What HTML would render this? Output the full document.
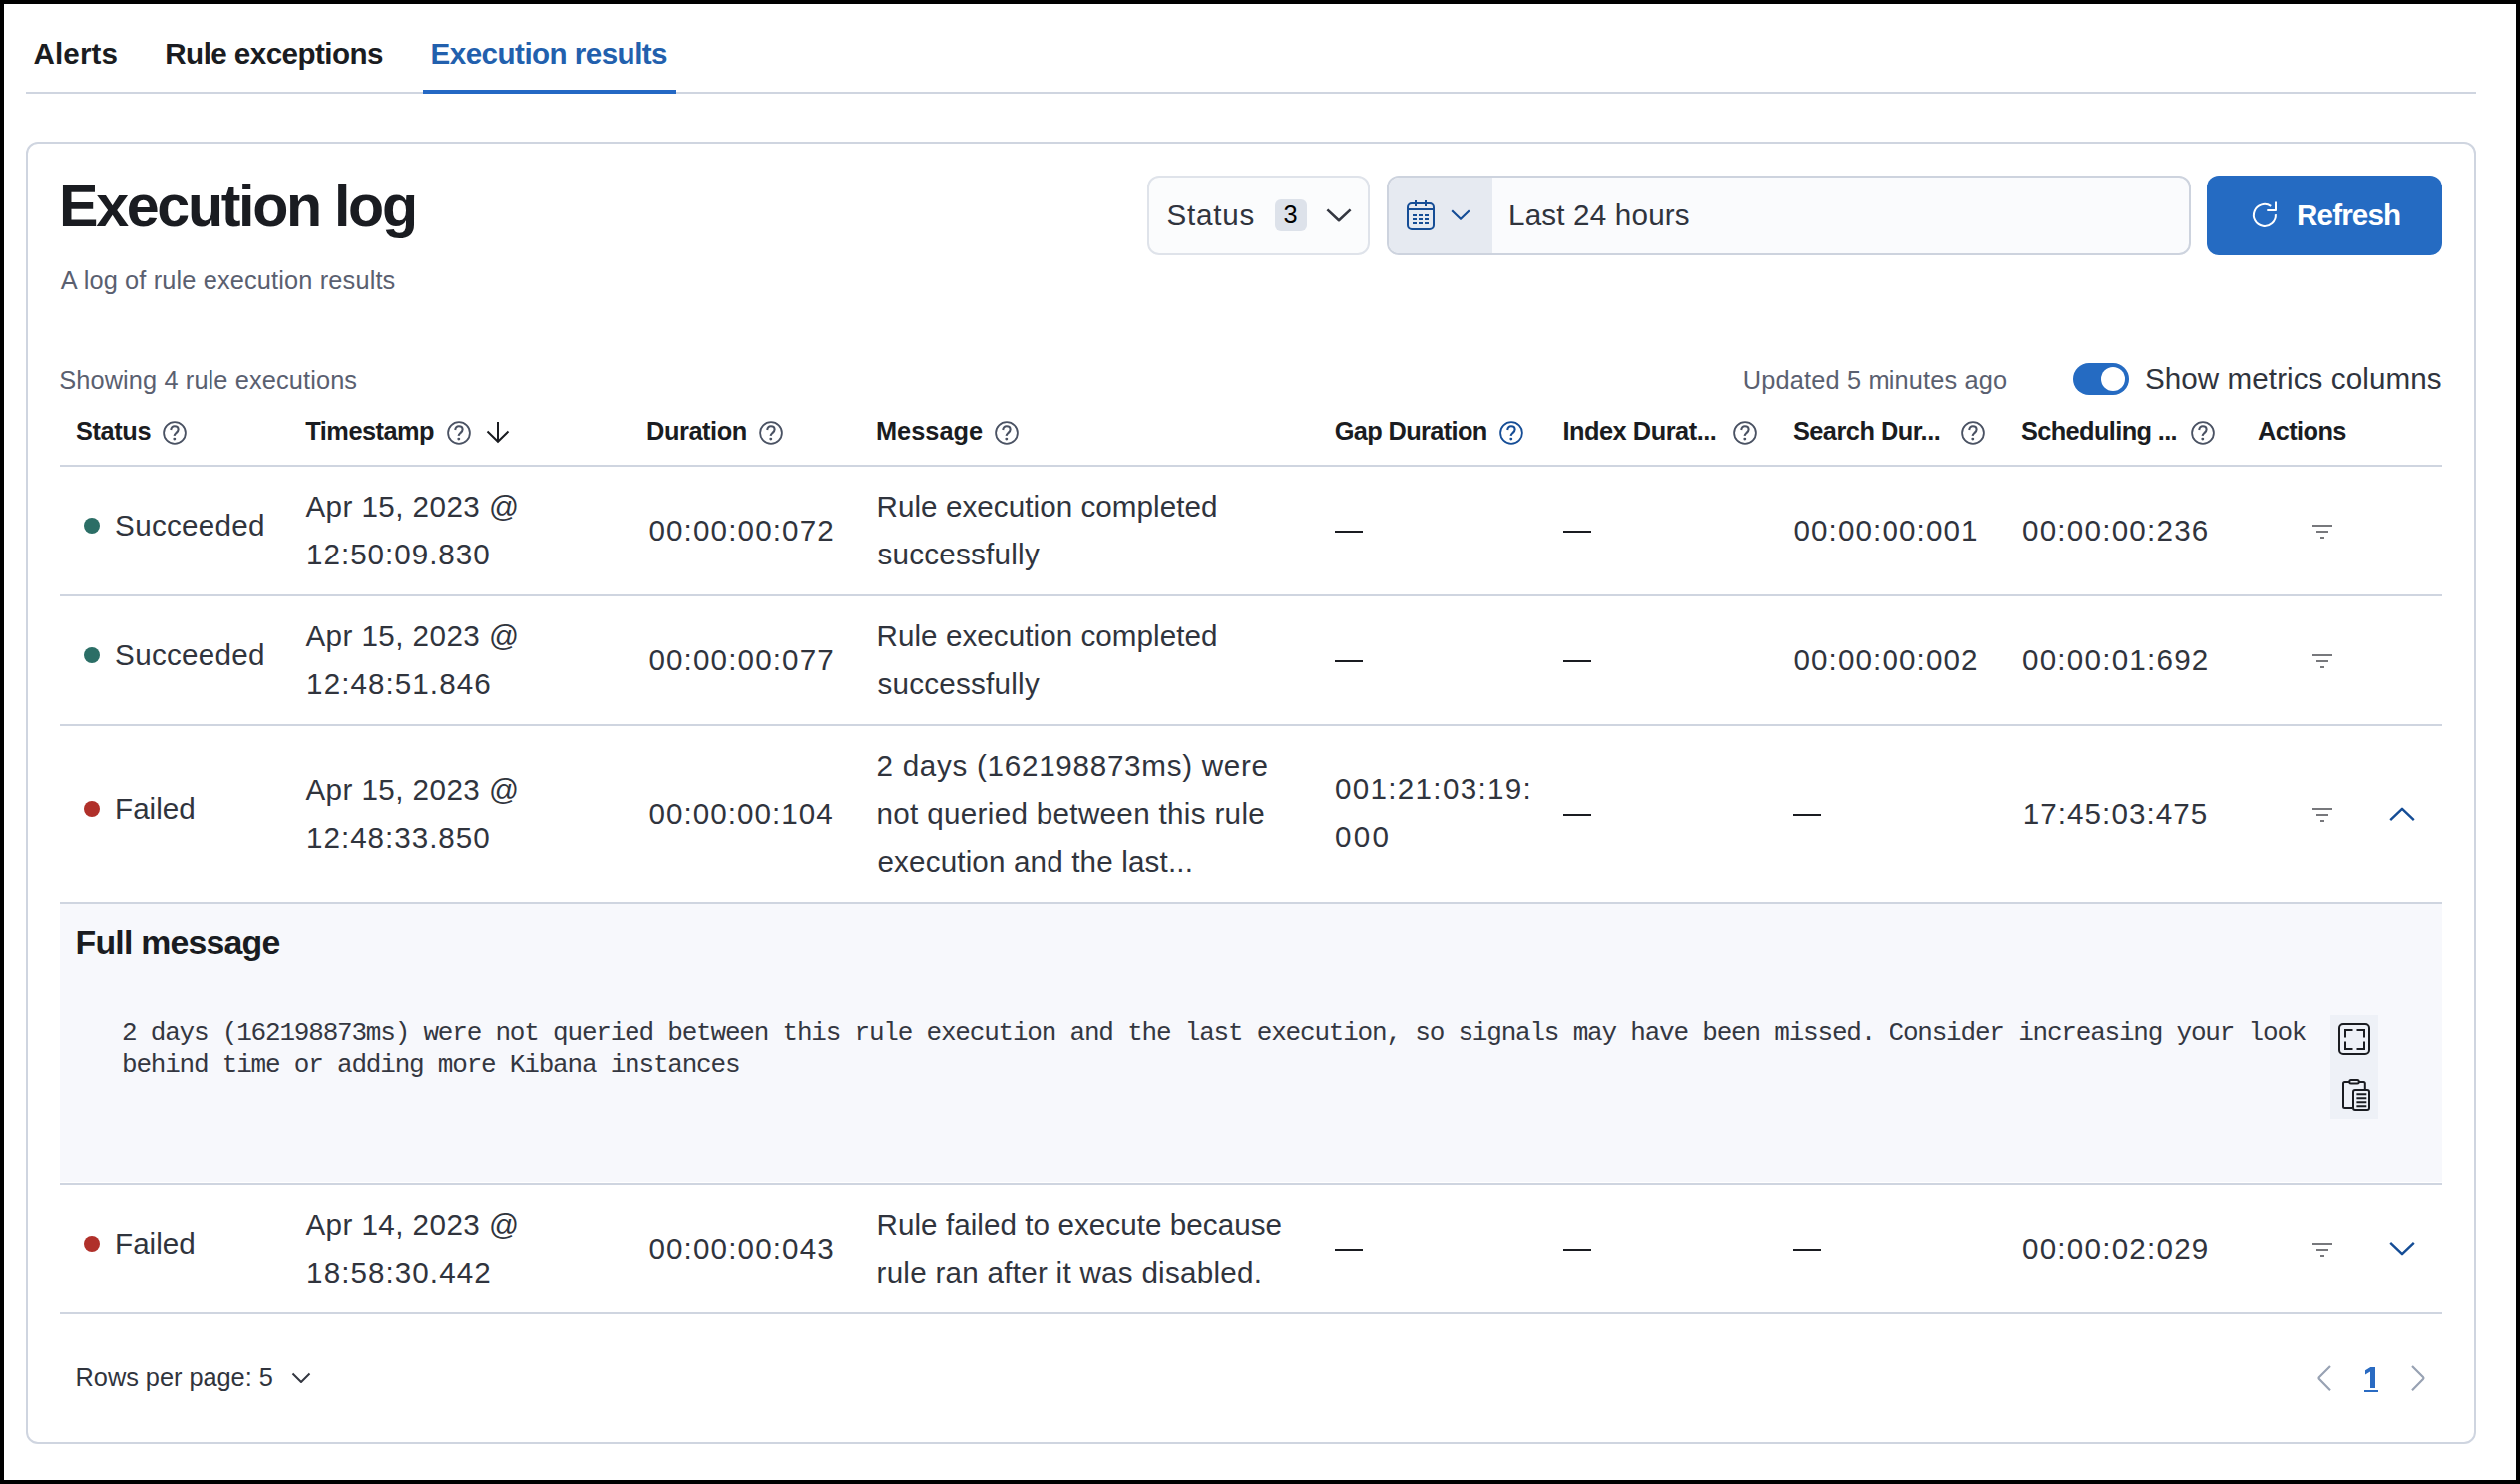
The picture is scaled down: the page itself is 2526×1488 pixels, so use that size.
<!DOCTYPE html>
<html><head><meta charset="utf-8"><title>Execution results</title>
<style>
html,body{margin:0;padding:0;width:2526px;height:1488px;overflow:hidden;background:#000}
.r,.t,.i{position:absolute;box-sizing:content-box}
.t{white-space:pre;font-family:'Liberation Sans',sans-serif}
</style></head><body>
<div class="r" style="left:4px;top:4px;width:2518px;height:1480px;background:#ffffff;"></div>
<div class="r" style="left:26px;top:92px;width:2456px;height:2px;background:#cfd5e0;"></div>
<div class="r" style="left:424px;top:90px;width:254px;height:4px;background:#2468c4;"></div>
<div class="r" style="left:26px;top:142px;width:2452px;height:1302px;border:2px solid #cfd5e0;border-radius:12px;background:#fff"></div>
<div class="r" style="left:1150px;top:176px;width:219px;height:76px;border:2px solid #dfe3ea;border-radius:12px;background:#fbfcfd"></div>
<div class="r" style="left:1278px;top:200px;width:32px;height:32px;background:#dde2ea;border-radius:6px"></div>
<svg class="i" style="left:1328px;top:208px" width="28" height="16" viewBox="0 0 28 16"><path d="M2.4 2.4 L14 13.2 L25.6 2.4" fill="none" stroke="#343741" stroke-width="2.6" stroke-linejoin="round"/></svg>
<div class="r" style="left:1390px;top:176px;width:802px;height:76px;border:2px solid #cdd3de;border-radius:12px;background:#fafbfd;overflow:hidden"><div style="position:absolute;left:0;top:0;width:104px;height:76px;background:#e6eaf1"></div></div>
<svg class="i" style="left:1409px;top:200px" width="30" height="32" viewBox="0 0 30 32"><rect x="2" y="4" width="26" height="26" rx="4" fill="none" stroke="#154d96" stroke-width="2"/><line x1="2" y1="10" x2="28" y2="10" stroke="#154d96" stroke-width="2"/><line x1="10" y1="1" x2="10" y2="7" stroke="#154d96" stroke-width="2"/><line x1="20" y1="1" x2="20" y2="7" stroke="#154d96" stroke-width="2"/><rect x="7" y="15" width="4" height="2" fill="#154d96"/><rect x="7" y="19" width="4" height="2" fill="#154d96"/><rect x="7" y="23" width="4" height="2" fill="#154d96"/><rect x="13" y="15" width="4" height="2" fill="#154d96"/><rect x="13" y="19" width="4" height="2" fill="#154d96"/><rect x="13" y="23" width="4" height="2" fill="#154d96"/><rect x="19" y="15" width="4" height="2" fill="#154d96"/><rect x="19" y="19" width="4" height="2" fill="#154d96"/><rect x="19" y="23" width="4" height="2" fill="#154d96"/></svg>
<svg class="i" style="left:1454px;top:210px" width="20" height="12" viewBox="0 0 20 12"><path d="M1.2 1.2 L10 9.8 L18.8 1.2" fill="none" stroke="#154d96" stroke-width="2.1" stroke-linejoin="round"/></svg>
<div class="r" style="left:2212px;top:176px;width:236px;height:80px;background:#256bc2;border-radius:12px"></div>
<svg class="i" style="left:2256px;top:200px" width="28" height="30" viewBox="0 0 28 30"><path d="M24.87 15.13 A11 11 0 1 1 20.21 6.89" fill="none" stroke="#fff" stroke-width="2"/><path d="M25 2.5 V10.9 H16.3" fill="none" stroke="#fff" stroke-width="2" stroke-linejoin="round"/></svg>
<div class="r" style="left:2078px;top:364px;width:56px;height:32px;background:#256bc2;border-radius:16px"></div>
<div class="r" style="left:2106px;top:368px;width:24px;height:24px;background:#ffffff;border-radius:12px"></div>
<svg class="i" style="left:163px;top:422px" width="24" height="24" viewBox="0 0 24 24"><circle cx="12" cy="12" r="10.9" fill="none" stroke="#4a5263" stroke-width="1.8"/><path d="M8.2 9C8.5 6.6 10 5.2 11.9 5.2C14 5.2 15.6 6.6 15.6 8.5C15.6 10.1 14.6 11 13.6 11.9C12.4 13 11.7 13.5 11.6 14.8" fill="none" stroke="#4a5263" stroke-width="2.1"/><circle cx="11.8" cy="18.1" r="1.45" fill="#4a5263"/></svg>
<svg class="i" style="left:448px;top:422px" width="24" height="24" viewBox="0 0 24 24"><circle cx="12" cy="12" r="10.9" fill="none" stroke="#4a5263" stroke-width="1.8"/><path d="M8.2 9C8.5 6.6 10 5.2 11.9 5.2C14 5.2 15.6 6.6 15.6 8.5C15.6 10.1 14.6 11 13.6 11.9C12.4 13 11.7 13.5 11.6 14.8" fill="none" stroke="#4a5263" stroke-width="2.1"/><circle cx="11.8" cy="18.1" r="1.45" fill="#4a5263"/></svg>
<svg class="i" style="left:761px;top:422px" width="24" height="24" viewBox="0 0 24 24"><circle cx="12" cy="12" r="10.9" fill="none" stroke="#4a5263" stroke-width="1.8"/><path d="M8.2 9C8.5 6.6 10 5.2 11.9 5.2C14 5.2 15.6 6.6 15.6 8.5C15.6 10.1 14.6 11 13.6 11.9C12.4 13 11.7 13.5 11.6 14.8" fill="none" stroke="#4a5263" stroke-width="2.1"/><circle cx="11.8" cy="18.1" r="1.45" fill="#4a5263"/></svg>
<svg class="i" style="left:997px;top:422px" width="24" height="24" viewBox="0 0 24 24"><circle cx="12" cy="12" r="10.9" fill="none" stroke="#4a5263" stroke-width="1.8"/><path d="M8.2 9C8.5 6.6 10 5.2 11.9 5.2C14 5.2 15.6 6.6 15.6 8.5C15.6 10.1 14.6 11 13.6 11.9C12.4 13 11.7 13.5 11.6 14.8" fill="none" stroke="#4a5263" stroke-width="2.1"/><circle cx="11.8" cy="18.1" r="1.45" fill="#4a5263"/></svg>
<svg class="i" style="left:1737px;top:422px" width="24" height="24" viewBox="0 0 24 24"><circle cx="12" cy="12" r="10.9" fill="none" stroke="#4a5263" stroke-width="1.8"/><path d="M8.2 9C8.5 6.6 10 5.2 11.9 5.2C14 5.2 15.6 6.6 15.6 8.5C15.6 10.1 14.6 11 13.6 11.9C12.4 13 11.7 13.5 11.6 14.8" fill="none" stroke="#4a5263" stroke-width="2.1"/><circle cx="11.8" cy="18.1" r="1.45" fill="#4a5263"/></svg>
<svg class="i" style="left:1966px;top:422px" width="24" height="24" viewBox="0 0 24 24"><circle cx="12" cy="12" r="10.9" fill="none" stroke="#4a5263" stroke-width="1.8"/><path d="M8.2 9C8.5 6.6 10 5.2 11.9 5.2C14 5.2 15.6 6.6 15.6 8.5C15.6 10.1 14.6 11 13.6 11.9C12.4 13 11.7 13.5 11.6 14.8" fill="none" stroke="#4a5263" stroke-width="2.1"/><circle cx="11.8" cy="18.1" r="1.45" fill="#4a5263"/></svg>
<svg class="i" style="left:2196px;top:422px" width="24" height="24" viewBox="0 0 24 24"><circle cx="12" cy="12" r="10.9" fill="none" stroke="#4a5263" stroke-width="1.8"/><path d="M8.2 9C8.5 6.6 10 5.2 11.9 5.2C14 5.2 15.6 6.6 15.6 8.5C15.6 10.1 14.6 11 13.6 11.9C12.4 13 11.7 13.5 11.6 14.8" fill="none" stroke="#4a5263" stroke-width="2.1"/><circle cx="11.8" cy="18.1" r="1.45" fill="#4a5263"/></svg>
<svg class="i" style="left:1503px;top:422px" width="24" height="24" viewBox="0 0 24 24"><circle cx="12" cy="12" r="10.9" fill="none" stroke="#154d96" stroke-width="1.8"/><path d="M8.2 9C8.5 6.6 10 5.2 11.9 5.2C14 5.2 15.6 6.6 15.6 8.5C15.6 10.1 14.6 11 13.6 11.9C12.4 13 11.7 13.5 11.6 14.8" fill="none" stroke="#154d96" stroke-width="2.1"/><circle cx="11.8" cy="18.1" r="1.45" fill="#154d96"/></svg>
<svg class="i" style="left:487px;top:422px" width="24" height="23" viewBox="0 0 24 23"><path d="M12 1 L12 20.5 M1.5 10.5 L12 20.8 L22.5 10.5" fill="none" stroke="#1a1c21" stroke-width="2"/></svg>
<div class="r" style="left:60px;top:466px;width:2388px;height:2px;background:#cfd5e0;"></div>
<div class="r" style="left:60px;top:596px;width:2388px;height:2px;background:#cfd5e0;"></div>
<div class="r" style="left:60px;top:726px;width:2388px;height:2px;background:#cfd5e0;"></div>
<div class="r" style="left:60px;top:904px;width:2388px;height:2px;background:#cfd5e0;"></div>
<div class="r" style="left:60px;top:1186px;width:2388px;height:2px;background:#cfd5e0;"></div>
<div class="r" style="left:60px;top:1316px;width:2388px;height:2px;background:#cfd5e0;"></div>
<div class="r" style="left:60px;top:906px;width:2388px;height:279px;background:#f7f8fc;"></div>
<div class="r" style="left:2336px;top:1018px;width:48px;height:104px;background:#eef1f7;"></div>
<svg class="i" style="left:2343px;top:1025px" width="34" height="34" viewBox="0 0 34 34"><rect x="2" y="2" width="30" height="30" rx="4" fill="none" stroke="#1a1c21" stroke-width="2"/><path d="M8 15.5 V8 H15.5 M19.5 8 H27 V15.5 M27 19.5 V27 H19.5 M15.5 27 H8 V19.5" fill="none" stroke="#1a1c21" stroke-width="2"/></svg>
<svg class="i" style="left:2347px;top:1081px" width="32" height="34" viewBox="0 0 32 34"><path d="M11 30 H3.5 A1.5 1.5 0 0 1 2 28.5 V5.5 A1.5 1.5 0 0 1 3.5 4 H22.3 A1.5 1.5 0 0 1 23.8 5.5 V11" fill="none" stroke="#1a1c21" stroke-width="2"/><rect x="8.3" y="2" width="9.4" height="3.6" rx="1.5" fill="#eef1f7" stroke="#1a1c21" stroke-width="2"/><rect x="12" y="12" width="16" height="20" rx="2" fill="#eef1f7" stroke="#1a1c21" stroke-width="2"/><path d="M15.4 16.2 H25.3 M15.4 20.2 H25.3 M15.4 24.2 H25.3 M15.4 28.2 H25.3" stroke="#1a1c21" stroke-width="2"/></svg>
<div class="r" style="left:84px;top:519px;width:16px;height:16px;background:#2b6e66;border-radius:8px"></div>
<div class="r" style="left:84px;top:649px;width:16px;height:16px;background:#2b6e66;border-radius:8px"></div>
<div class="r" style="left:84px;top:803px;width:16px;height:16px;background:#b0302a;border-radius:8px"></div>
<div class="r" style="left:84px;top:1239px;width:16px;height:16px;background:#b0302a;border-radius:8px"></div>
<div class="r" style="left:1338px;top:532px;width:28px;height:2px;background:#1a1c21;"></div>
<div class="r" style="left:1567px;top:532px;width:28px;height:2px;background:#1a1c21;"></div>
<div class="r" style="left:1338px;top:662px;width:28px;height:2px;background:#1a1c21;"></div>
<div class="r" style="left:1567px;top:662px;width:28px;height:2px;background:#1a1c21;"></div>
<div class="r" style="left:1567px;top:816px;width:28px;height:2px;background:#1a1c21;"></div>
<div class="r" style="left:1797px;top:816px;width:28px;height:2px;background:#1a1c21;"></div>
<div class="r" style="left:1338px;top:1252px;width:28px;height:2px;background:#1a1c21;"></div>
<div class="r" style="left:1567px;top:1252px;width:28px;height:2px;background:#1a1c21;"></div>
<div class="r" style="left:1797px;top:1252px;width:28px;height:2px;background:#1a1c21;"></div>
<div class="r" style="left:2318px;top:526px;width:20px;height:2px;background:#77787c"></div><div class="r" style="left:2322px;top:532px;width:12px;height:2px;background:#77787c"></div><div class="r" style="left:2326px;top:538px;width:4px;height:2px;background:#77787c"></div>
<div class="r" style="left:2318px;top:656px;width:20px;height:2px;background:#77787c"></div><div class="r" style="left:2322px;top:662px;width:12px;height:2px;background:#77787c"></div><div class="r" style="left:2326px;top:668px;width:4px;height:2px;background:#77787c"></div>
<div class="r" style="left:2318px;top:810px;width:20px;height:2px;background:#77787c"></div><div class="r" style="left:2322px;top:816px;width:12px;height:2px;background:#77787c"></div><div class="r" style="left:2326px;top:822px;width:4px;height:2px;background:#77787c"></div>
<div class="r" style="left:2318px;top:1246px;width:20px;height:2px;background:#77787c"></div><div class="r" style="left:2322px;top:1252px;width:12px;height:2px;background:#77787c"></div><div class="r" style="left:2326px;top:1258px;width:4px;height:2px;background:#77787c"></div>
<svg class="i" style="left:2394px;top:808px" width="28" height="17" viewBox="0 0 28 17"><path d="M2.2 14.2 L14 2.8 L25.8 14.2" fill="none" stroke="#154d96" stroke-width="2.4" stroke-linejoin="round"/></svg>
<svg class="i" style="left:2394px;top:1243px" width="28" height="17" viewBox="0 0 28 17"><path d="M2.2 2.8 L14 14.2 L25.8 2.8" fill="none" stroke="#154d96" stroke-width="2.4" stroke-linejoin="round"/></svg>
<svg class="i" style="left:292px;top:1376px" width="20" height="12" viewBox="0 0 20 12"><path d="M1.5 1.5 L10 10 L18.5 1.5" fill="none" stroke="#343741" stroke-width="2" stroke-linejoin="round"/></svg>
<svg class="i" style="left:2322px;top:1368px" width="16" height="28" viewBox="0 0 16 28"><path d="M14 2 L3 13 Q2 14 3 15 L14 26.3" fill="none" stroke="#98a2b3" stroke-width="2.2"/></svg>
<svg class="i" style="left:2416px;top:1368px" width="16" height="28" viewBox="0 0 16 28"><path d="M2 2 L13 13 Q14 14 13 15 L2 26.3" fill="none" stroke="#98a2b3" stroke-width="2.2"/></svg>
<div class="r" style="left:2370px;top:1394px;width:14px;height:2px;background:#2a6bc2;"></div>
<svg class="i" style="left:2370px;top:1370px" width="12" height="24" viewBox="0 0 12 24"><path d="M11 1 L6.3 1 L1 4.3 L1 8.6 L6 5.6 L6 22 L11 22 Z" fill="#2a6bc2"/></svg>
<div class="t" style="left:122px;top:1019.9px;font-family:'Liberation Mono',monospace;font-size:26px;line-height:32px;letter-spacing:-1.20px;color:#343741">2 days (162198873ms) were not queried between this rule execution and the last execution, so signals may have been missed. Consider increasing your look</div>
<div class="t" style="left:122px;top:1051.9px;font-family:'Liberation Mono',monospace;font-size:26px;line-height:32px;letter-spacing:-1.20px;color:#343741">behind time or adding more Kibana instances</div>
<div class="t" style="left:33.6px;top:31.7px;font-size:29.60px;line-height:44px;font-weight:700;color:#1a1c21;letter-spacing:0.080px">Alerts</div>
<div class="t" style="left:165.3px;top:31.7px;font-size:29.60px;line-height:44px;font-weight:700;color:#1a1c21;letter-spacing:-0.557px">Rule exceptions</div>
<div class="t" style="left:431.6px;top:31.6px;font-size:29.60px;line-height:44px;font-weight:700;color:#2260ad;letter-spacing:-0.544px">Execution results</div>
<div class="t" style="left:59.0px;top:162.0px;font-size:59.19px;line-height:89px;font-weight:700;color:#1a1c21;letter-spacing:-2.333px">Execution log</div>
<div class="t" style="left:60.8px;top:262.4px;font-size:25.37px;line-height:38px;font-weight:400;color:#5a6070;letter-spacing:0.140px">A log of rule execution results</div>
<div class="t" style="left:1169.6px;top:193.7px;font-size:29.60px;line-height:44px;font-weight:400;color:#30343d;letter-spacing:0.780px">Status</div>
<div class="t" style="left:1286.6px;top:195.8px;font-size:25.37px;line-height:38px;font-weight:400;color:#000;letter-spacing:0.000px">3</div>
<div class="t" style="left:1512.0px;top:193.5px;font-size:29.60px;line-height:44px;font-weight:400;color:#30343d;letter-spacing:0.192px">Last 24 hours</div>
<div class="t" style="left:2302.0px;top:193.7px;font-size:29.60px;line-height:44px;font-weight:700;color:#fff;letter-spacing:-0.833px">Refresh</div>
<div class="t" style="left:59.2px;top:362.4px;font-size:25.37px;line-height:38px;font-weight:400;color:#5a6070;letter-spacing:0.117px">Showing 4 rule executions</div>
<div class="t" style="left:1746.7px;top:362.2px;font-size:25.37px;line-height:38px;font-weight:400;color:#5a6070;letter-spacing:0.165px">Updated 5 minutes ago</div>
<div class="t" style="left:2149.9px;top:358.2px;font-size:29.60px;line-height:44px;font-weight:400;color:#30343d;letter-spacing:0.084px">Show metrics columns</div>
<div class="t" style="left:76.0px;top:413.2px;font-size:25.37px;line-height:38px;font-weight:700;color:#1a1c21;letter-spacing:-0.400px">Status</div>
<div class="t" style="left:306.3px;top:413.2px;font-size:25.37px;line-height:38px;font-weight:700;color:#1a1c21;letter-spacing:-0.513px">Timestamp</div>
<div class="t" style="left:648.0px;top:413.2px;font-size:25.37px;line-height:38px;font-weight:700;color:#1a1c21;letter-spacing:-0.429px">Duration</div>
<div class="t" style="left:878.0px;top:413.2px;font-size:25.37px;line-height:38px;font-weight:700;color:#1a1c21;letter-spacing:0.000px">Message</div>
<div class="t" style="left:1337.8px;top:413.2px;font-size:25.37px;line-height:38px;font-weight:700;color:#1a1c21;letter-spacing:-0.655px">Gap Duration</div>
<div class="t" style="left:1566.4px;top:413.2px;font-size:25.37px;line-height:38px;font-weight:700;color:#1a1c21;letter-spacing:-0.477px">Index Durat...</div>
<div class="t" style="left:1796.9px;top:413.2px;font-size:25.37px;line-height:38px;font-weight:700;color:#1a1c21;letter-spacing:-0.517px">Search Dur...</div>
<div class="t" style="left:2026.0px;top:413.2px;font-size:25.37px;line-height:38px;font-weight:700;color:#1a1c21;letter-spacing:-0.631px">Scheduling ...</div>
<div class="t" style="left:2263.0px;top:413.2px;font-size:25.37px;line-height:38px;font-weight:700;color:#1a1c21;letter-spacing:-0.600px">Actions</div>
<div class="t" style="left:115.1px;top:504.7px;font-size:29.60px;line-height:44px;font-weight:400;color:#30343d;letter-spacing:0.300px">Succeeded</div>
<div class="t" style="left:306.4px;top:486.0px;font-size:29.60px;line-height:44px;font-weight:400;color:#30343d;letter-spacing:0.446px">Apr 15, 2023 @</div>
<div class="t" style="left:307.1px;top:533.5px;font-size:29.60px;line-height:44px;font-weight:400;color:#30343d;letter-spacing:0.982px">12:50:09.830</div>
<div class="t" style="left:650.4px;top:509.6px;font-size:29.60px;line-height:44px;font-weight:400;color:#30343d;letter-spacing:1.145px">00:00:00:072</div>
<div class="t" style="left:878.5px;top:486.0px;font-size:29.60px;line-height:44px;font-weight:400;color:#30343d;letter-spacing:0.065px">Rule execution completed</div>
<div class="t" style="left:879.5px;top:534.0px;font-size:29.60px;line-height:44px;font-weight:400;color:#30343d;letter-spacing:0.245px">successfully</div>
<div class="t" style="left:1797.4px;top:509.6px;font-size:29.60px;line-height:44px;font-weight:400;color:#30343d;letter-spacing:1.127px">00:00:00:001</div>
<div class="t" style="left:2027.0px;top:509.6px;font-size:29.60px;line-height:44px;font-weight:400;color:#30343d;letter-spacing:1.227px">00:00:00:236</div>
<div class="t" style="left:115.1px;top:634.7px;font-size:29.60px;line-height:44px;font-weight:400;color:#30343d;letter-spacing:0.300px">Succeeded</div>
<div class="t" style="left:306.4px;top:616.0px;font-size:29.60px;line-height:44px;font-weight:400;color:#30343d;letter-spacing:0.446px">Apr 15, 2023 @</div>
<div class="t" style="left:307.1px;top:663.5px;font-size:29.60px;line-height:44px;font-weight:400;color:#30343d;letter-spacing:1.073px">12:48:51.846</div>
<div class="t" style="left:650.4px;top:639.6px;font-size:29.60px;line-height:44px;font-weight:400;color:#30343d;letter-spacing:1.145px">00:00:00:077</div>
<div class="t" style="left:878.5px;top:616.0px;font-size:29.60px;line-height:44px;font-weight:400;color:#30343d;letter-spacing:0.065px">Rule execution completed</div>
<div class="t" style="left:879.5px;top:664.0px;font-size:29.60px;line-height:44px;font-weight:400;color:#30343d;letter-spacing:0.245px">successfully</div>
<div class="t" style="left:1797.4px;top:639.6px;font-size:29.60px;line-height:44px;font-weight:400;color:#30343d;letter-spacing:1.127px">00:00:00:002</div>
<div class="t" style="left:2027.0px;top:639.6px;font-size:29.60px;line-height:44px;font-weight:400;color:#30343d;letter-spacing:1.227px">00:00:01:692</div>
<div class="t" style="left:115.1px;top:788.7px;font-size:29.60px;line-height:44px;font-weight:400;color:#30343d;letter-spacing:-0.020px">Failed</div>
<div class="t" style="left:306.4px;top:770.0px;font-size:29.60px;line-height:44px;font-weight:400;color:#30343d;letter-spacing:0.446px">Apr 15, 2023 @</div>
<div class="t" style="left:307.1px;top:817.5px;font-size:29.60px;line-height:44px;font-weight:400;color:#30343d;letter-spacing:0.982px">12:48:33.850</div>
<div class="t" style="left:650.4px;top:793.6px;font-size:29.60px;line-height:44px;font-weight:400;color:#30343d;letter-spacing:1.055px">00:00:00:104</div>
<div class="t" style="left:878.5px;top:746.0px;font-size:29.60px;line-height:44px;font-weight:400;color:#30343d;letter-spacing:0.729px">2 days (162198873ms) were</div>
<div class="t" style="left:878.5px;top:793.7px;font-size:29.60px;line-height:44px;font-weight:400;color:#30343d;letter-spacing:0.329px">not queried between this rule</div>
<div class="t" style="left:879.5px;top:841.7px;font-size:29.60px;line-height:44px;font-weight:400;color:#30343d;letter-spacing:0.158px">execution and the last...</div>
<div class="t" style="left:1338.0px;top:769.4px;font-size:29.60px;line-height:44px;font-weight:400;color:#30343d;letter-spacing:1.308px">001:21:03:19:</div>
<div class="t" style="left:1338.0px;top:817.0px;font-size:29.60px;line-height:44px;font-weight:400;color:#30343d;letter-spacing:2.350px">000</div>
<div class="t" style="left:2027.7px;top:793.9px;font-size:29.60px;line-height:44px;font-weight:400;color:#30343d;letter-spacing:1.073px">17:45:03:475</div>
<div class="t" style="left:115.1px;top:1224.7px;font-size:29.60px;line-height:44px;font-weight:400;color:#30343d;letter-spacing:-0.020px">Failed</div>
<div class="t" style="left:306.4px;top:1206.0px;font-size:29.60px;line-height:44px;font-weight:400;color:#30343d;letter-spacing:0.446px">Apr 14, 2023 @</div>
<div class="t" style="left:307.1px;top:1253.5px;font-size:29.60px;line-height:44px;font-weight:400;color:#30343d;letter-spacing:1.073px">18:58:30.442</div>
<div class="t" style="left:650.4px;top:1229.6px;font-size:29.60px;line-height:44px;font-weight:400;color:#30343d;letter-spacing:1.145px">00:00:00:043</div>
<div class="t" style="left:878.5px;top:1206.0px;font-size:29.60px;line-height:44px;font-weight:400;color:#30343d;letter-spacing:0.062px">Rule failed to execute because</div>
<div class="t" style="left:878.5px;top:1253.7px;font-size:29.60px;line-height:44px;font-weight:400;color:#30343d;letter-spacing:0.273px">rule ran after it was disabled.</div>
<div class="t" style="left:2027.0px;top:1229.6px;font-size:29.60px;line-height:44px;font-weight:400;color:#30343d;letter-spacing:1.227px">00:00:02:029</div>
<div class="t" style="left:75.6px;top:919.5px;font-size:33.82px;line-height:51px;font-weight:700;color:#1a1c21;letter-spacing:-0.782px">Full message</div>
<div class="t" style="left:75.6px;top:1362.1px;font-size:25.37px;line-height:38px;font-weight:400;color:#30343d;letter-spacing:-0.040px">Rows per page: 5</div>
</body></html>
